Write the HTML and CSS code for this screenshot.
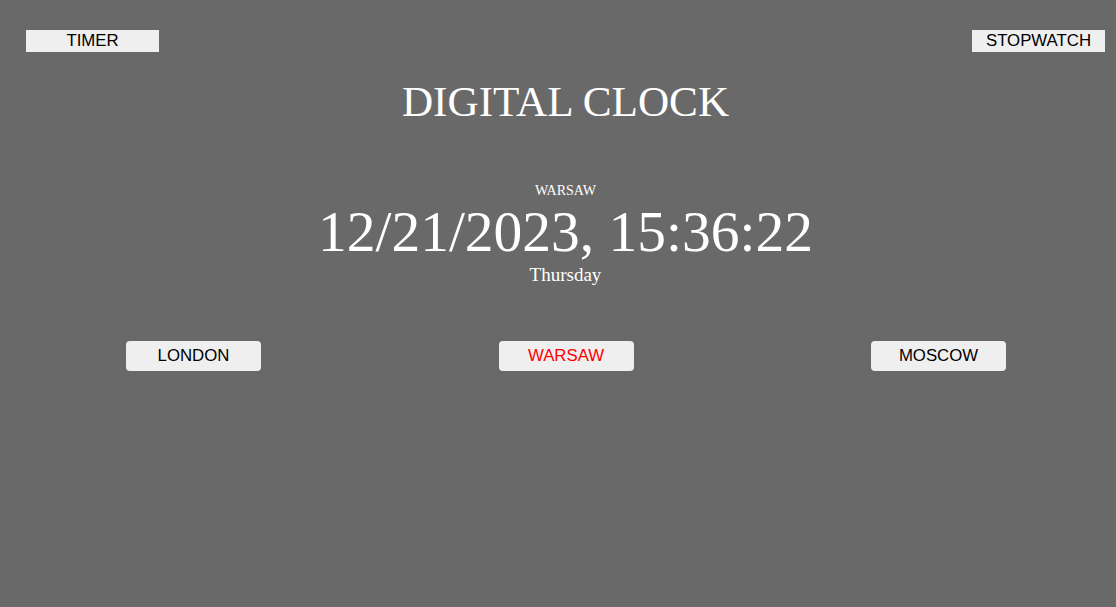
FILE: index.html
```html
<!DOCTYPE html>
<html>
<head>
<meta charset="utf-8">
<link rel="stylesheet" href="styles.css">
</head>
<body>
<div class="page">
  <div class="topbar">
    <button class="nav-btn">TIMER</button>
    <button class="nav-btn">STOPWATCH</button>
  </div>
  <h1 class="title">DIGITAL CLOCK</h1>
  <div class="clock">
    <div class="city">WARSAW</div>
    <div class="time">12/21/2023, 15:36:22</div>
    <div class="day">Thursday</div>
  </div>
  <div class="cities">
    <button class="city-btn">LONDON</button>
    <button class="city-btn active">WARSAW</button>
    <button class="city-btn">MOSCOW</button>
  </div>
</div>
</body>
</html>
```

FILE: styles.css
```css
html, body {
  margin: 0;
  padding: 0;
  height: 100%;
}
body {
  background: #696969;
  color: #ffffff;
  font-family: "Liberation Serif", "Times New Roman", serif;
}
.page {
  margin: 0 11px 0 26px;
  padding-top: 30px;
}
.topbar {
  display: flex;
  justify-content: space-between;
}
.nav-btn {
  width: 133px;
  height: 22px;
  padding: 0;
  border: none;
  border-radius: 0;
  background: #efefef;
  color: #000;
  font-family: "Liberation Sans", Arial, sans-serif;
  font-size: 16.8px;
  line-height: 22px;
}
.title {
  margin: 26px 0 0;
  text-align: center;
  font-weight: normal;
  font-size: 43.2px;
  line-height: 48px;
}
.clock {
  margin-top: 57px;
  text-align: center;
}
.city {
  font-size: 14px;
  line-height: 16px;
}
.time {
  margin-top: 2px;
  font-size: 57.5px;
  line-height: 62px;
}
.day {
  margin-top: 1px;
  font-size: 19px;
  line-height: 22px;
}
.cities {
  display: flex;
  justify-content: space-between;
  padding: 0 99px 0 100px;
  margin-top: 55px;
}
.city-btn {
  width: 135px;
  height: 30px;
  padding: 0;
  border: none;
  border-radius: 4px;
  background: #efefef;
  color: #000;
  font-family: "Liberation Sans", Arial, sans-serif;
  font-size: 16.8px;
}
.city-btn.active {
  color: #ff0000;
}
```
